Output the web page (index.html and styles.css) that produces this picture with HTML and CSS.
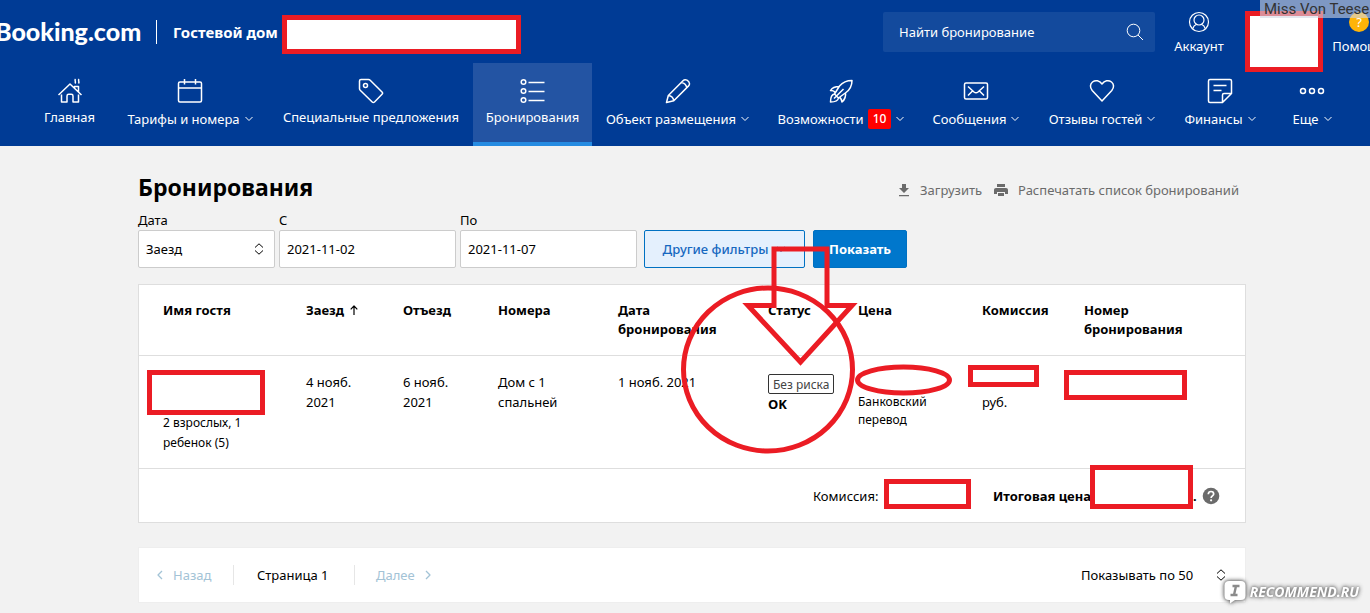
FILE: index.html
```html
<!DOCTYPE html>
<html lang="ru">
<head>
<meta charset="utf-8">
<title>Бронирования</title>
<link rel="stylesheet" href="styles.css">
</head>
<body>
<header class="header">
  <div class="topbar">
    <a class="logo" href="#">Booking.com</a>
    <span class="property">Гостевой дом</span>
    <form class="search">
      <input class="search-input" type="text" aria-label="Найти бронирование" placeholder="Найти бронирование">
      <button class="search-button" type="button" aria-label="Найти">
        <svg width="18" height="18" viewBox="0 0 18 18" class="line"><circle cx="7.5" cy="7.5" r="6.3"/><path d="M12 12l5 5"/></svg>
      </button>
    </form>
    <a class="account" href="#">
      <svg width="22" height="22" viewBox="0 0 22 22" class="line"><circle cx="11" cy="11" r="9.5"/><circle cx="11" cy="9" r="5"/><path d="M4.600 17.800c.8-2.300 2-3.800 4-4.500M17.400 17.800c-.8-2.300-2-3.800-4-4.500"/></svg>
      <span>Аккаунт</span>
    </a>
    <a class="help" href="#">
      <span class="help-icon">?</span>
      <span>Помощь</span>
    </a>
  </div>
  <nav class="nav">
    <a class="tab" href="#">
      <svg width="26" height="26" viewBox="0 0 26 26" class="line"><path d="M1.500 17L13 6l11.500 11M4.500 16.500V24h5.500v-6c0-1 .8-1.700 1.700-1.700h2.600c1 0 1.700.8 1.700 1.700v6h5.500v-7.500M17.500 10V8.500h4V14M18.500 1c-1.500 1.500 1 2.500-.5 4.500M22 1c-1.500 1.500 1 2.500-.5 4.500"/></svg>
      <span class="tab-label">Главная</span>
    </a>
    <a class="tab more" href="#">
      <svg width="26" height="26" viewBox="0 0 26 26" class="line"><rect x="1.500" y="4" width="23" height="20" rx="1.500"/><path d="M1.500 10h23M7.500 1v5.500M18.500 1v5.500"/></svg>
      <span class="tab-label">Тарифы и номера<svg class="chev line" width="8" height="6" viewBox="0 0 8 6"><path d="M.5 1L4 4.500 7.500 1"/></svg></span>
    </a>
    <a class="tab" href="#">
      <svg width="26" height="26" viewBox="0 0 26 26" class="line"><path d="M3 1.500h7.500c.7 0 1.200.2 1.700.7L24 14c.8.800.8 1.500 0 2.300L16.500 24c-.8.700-1.600.7-2.300 0L2.200 12.200c-.5-.5-.7-1-.7-1.700V3c0-1 .5-1.500 1.500-1.500z"/><circle cx="7.500" cy="7.500" r="2"/></svg>
      <span class="tab-label">Специальные предложения</span>
    </a>
    <a class="tab active" href="#" aria-current="page">
      <svg width="26" height="26" viewBox="0 0 26 26" class="line"><circle cx="3.500" cy="4" r="2.300"/><circle cx="3.500" cy="13" r="2.300"/><circle cx="3.500" cy="22" r="2.300"/><path d="M8.500 4.500h16M8.500 13.500h16M8.500 22.500h16"/></svg>
      <span class="tab-label">Бронирования</span>
    </a>
    <a class="tab more" href="#">
      <svg width="26" height="26" viewBox="0 0 26 26" class="line"><path d="M1.500 24.500l1.800-7L18 2.700c1-1 2.400-1.300 4-.5 1.500.8 2.300 2 2.500 3.300.1 1-.3 1.800-.9 2.400L8.800 22.700zM16.500 4.500c3 .5 4.800 2.300 5.300 5.300M3.300 17.500c3 .3 5 2.200 5.500 5.200"/></svg>
      <span class="tab-label">Объект размещения<svg class="chev line" width="8" height="6" viewBox="0 0 8 6"><path d="M.5 1L4 4.500 7.500 1"/></svg></span>
    </a>
    <a class="tab more" href="#">
      <svg width="26" height="26" viewBox="0 0 26 26" class="line"><path d="M24 2.500c-5.500 0-9.500 2-12.500 5.500l-5 8 4 4 7.500-5.500c4-3 6-7 6-12zM11.500 8.500C8 8.500 4.500 9 2.500 12.500c2.500 0 4 .5 4.500 2M17.500 14.500c.5 3.500 0 6.500-3.500 9.500-.5-2.500-1-4-2.500-4.500M6.500 16c-3 .5-4 4-4 8 4 0 7.500-1 8-4M6 20.500L15.500 11"/></svg>
      <span class="tab-label">Возможности<b class="count">10</b><svg class="chev line" width="8" height="6" viewBox="0 0 8 6"><path d="M.5 1L4 4.500 7.500 1"/></svg></span>
    </a>
    <a class="tab more" href="#">
      <svg width="26" height="26" viewBox="0 0 26 26" class="line"><rect x="1.500" y="5" width="23" height="16" rx="1.500"/><path d="M5 8.500l6 5.500c1.300 1 2.700 1 4 0l6-5.500M5 17.500l4.500-4.500M21 17.500L16.500 13"/></svg>
      <span class="tab-label">Сообщения<svg class="chev line" width="8" height="6" viewBox="0 0 8 6"><path d="M.5 1L4 4.500 7.500 1"/></svg></span>
    </a>
    <a class="tab more" href="#">
      <svg width="26" height="26" viewBox="0 0 26 26" class="line"><path d="M13 23L3.200 12.500C.7 9.500 1 6 3.500 4c3-2.300 7-1.500 9.500 2 2.500-3.500 6.500-4.300 9.500-2 2.500 2 2.800 5.500.3 8.500z"/></svg>
      <span class="tab-label">Отзывы гостей<svg class="chev line" width="8" height="6" viewBox="0 0 8 6"><path d="M.5 1L4 4.500 7.500 1"/></svg></span>
    </a>
    <a class="tab more" href="#">
      <svg width="26" height="26" viewBox="0 0 26 26" class="line"><path d="M15.500 24.500H3c-1 0-1.500-.5-1.500-1.500V3c0-1 .5-1.500 1.500-1.500h20c1 0 1.500.5 1.500 1.500v12.500zM15.500 24.500V17c0-1 .5-1.500 1.500-1.500h7.500M6.500 7.500h13M6.500 12.500h8"/></svg>
      <span class="tab-label">Финансы<svg class="chev line" width="8" height="6" viewBox="0 0 8 6"><path d="M.5 1L4 4.500 7.500 1"/></svg></span>
    </a>
    <a class="tab more" href="#">
      <svg width="26" height="26" viewBox="0 0 26 26" class="line"><circle cx="4" cy="13" r="2.500"/><circle cx="13" cy="13" r="2.500"/><circle cx="22" cy="13" r="2.500"/></svg>
      <span class="tab-label">Еще<svg class="chev line" width="8" height="6" viewBox="0 0 8 6"><path d="M.5 1L4 4.500 7.500 1"/></svg></span>
    </a>
  </nav>
</header>

<main class="content">
  <div class="title-row">
    <h1 class="title">Бронирования</h1>
    <div class="actions">
      <a class="action" href="#">
        <svg width="12" height="14" viewBox="0 0 12 14" fill="currentColor"><path d="M4 1h4v4h3L6 10 1 5h3zM1 12h10v1.300H1z"/></svg>Загрузить</a>
      <a class="action" href="#">
        <svg width="14" height="14" viewBox="0 0 14 14" fill="currentColor"><path d="M3 1h8v3H3zM2 5h10c1.200 0 2 .8 2 2v4h-3V9H3v2H0V7c0-1.200.8-2 2-2zM4 10h6v3H4z"/></svg>Распечатать список бронирований</a>
    </div>
  </div>

  <form class="filters">
    <div class="field field-type">
      <label for="date-type">Дата</label>
      <div class="select-wrap">
        <select id="date-type" class="control"><option>Заезд</option></select>
        <svg class="sort line" width="10" height="12" viewBox="0 0 10 12"><path d="M1 4.500L5 .8l4 3.700M1 7.500l4 3.700 4-3.700"/></svg>
      </div>
    </div>
    <div class="field field-date">
      <label for="date-from">С</label>
      <input id="date-from" class="control" type="text" value="2021-11-02">
    </div>
    <div class="field field-date">
      <label for="date-to">По</label>
      <input id="date-to" class="control" type="text" value="2021-11-07">
    </div>
    <div class="buttons">
      <button class="button secondary" type="button">Другие фильтры<svg class="line" width="10" height="6" viewBox="0 0 10 6"><path d="M1 1l4 4 4-4"/></svg></button>
      <button class="button primary" type="button">Показать</button>
    </div>
  </form>

  <section class="card">
    <table class="bookings">
      <colgroup>
        <col class="c-guest"><col class="c-in"><col class="c-out"><col class="c-rooms"><col class="c-date"><col class="c-status"><col class="c-price"><col class="c-fee"><col class="c-number">
      </colgroup>
      <thead>
        <tr>
          <th>Имя гостя</th>
          <th>Заезд<svg class="arrow line" width="8" height="10" viewBox="0 0 8 10"><path d="M4 10V1M.7 4.300L4 1l3.300 3.300"/></svg></th>
          <th>Отъезд</th>
          <th>Номера</th>
          <th>Дата<br>бронирования</th>
          <th>Статус</th>
          <th>Цена</th>
          <th>Комиссия</th>
          <th>Номер<br>бронирования</th>
        </tr>
      </thead>
      <tbody>
        <tr>
          <td><div class="blank double"></div><div class="guests">2 взрослых, 1<br>ребенок (5)</div></td>
          <td>4 нояб.<br>2021</td>
          <td>6 нояб.<br>2021</td>
          <td>Дом с 1<br>спальней</td>
          <td>1 нояб. 2021</td>
          <td><span class="badge">Без риска</span><b class="ok">OK</b></td>
          <td><div class="blank"></div><div class="payment">Банковский<br>перевод</div></td>
          <td><div class="blank"></div>руб.</td>
          <td></td>
        </tr>
      </tbody>
    </table>
    <div class="totals">
      <span class="total-fee">Комиссия:</span>
      <b class="total-price">Итоговая цена:</b>
      <b class="total-end">.</b>
      <svg width="18" height="18" viewBox="0 0 18 18"><circle cx="9" cy="9" r="8.300" fill="#6b6b6b"/><path d="M6.300 7.200C6.300 5.500 7.500 4.500 9 4.500s2.700 1 2.700 2.500c0 1.900-2.600 2-2.600 4" fill="none" stroke="#fff" stroke-width="1.700"/><circle cx="9.100" cy="13.300" r="1.100" fill="#fff"/></svg>
    </div>
  </section>

  <section class="card pager">
    <button class="page-link back" type="button" disabled><svg class="line" width="6" height="10" viewBox="0 0 6 10"><path d="M5 1L1 5l4 4"/></svg>Назад</button>
    <span class="page-current">Страница 1</span>
    <button class="page-link" type="button" disabled>Далее<svg class="line" width="6" height="10" viewBox="0 0 6 10"><path d="M1 1l4 4-4 4"/></svg></button>
    <div class="select-wrap per-page">
      <select class="per-page-select" aria-label="Показывать по"><option>Показывать по 50</option></select>
      <svg class="sort line" width="10" height="12" viewBox="0 0 10 12"><path d="M1 4.500L5 .8l4 3.700M1 7.500l4 3.700 4-3.700"/></svg>
    </div>
  </section>
</main>

<svg class="markup" width="1370" height="613" viewBox="0 0 1370 613" aria-hidden="true">
  <g fill="#fff" stroke="#eb1c24" stroke-width="5" shape-rendering="crispEdges">
    <rect x="284.500" y="17.500" width="234" height="34"/>
    <rect x="1247.500" y="13.500" width="73" height="56"/>
    <rect x="149.500" y="372.500" width="113" height="40"/>
    <rect x="970.500" y="367.500" width="66" height="17"/>
    <rect x="1066.500" y="372.500" width="118" height="25"/>
    <rect x="886.500" y="481.500" width="82" height="25"/>
    <rect x="1092.500" y="467.500" width="98" height="39"/>
  </g>
  <g fill="none" stroke="#eb1c24" stroke-width="5">
    <ellipse cx="768" cy="369.500" rx="84.500" ry="81.500"/>
    <ellipse cx="903.500" cy="380" rx="46" ry="13"/>
    <path d="M774 249h53v56.500h25L800.500 362 748 305.500h26z"/>
  </g>
</svg>
<div class="author">Miss Von Teese</div>
<div class="site">
  <svg width="22" height="24" viewBox="0 0 22 24"><path d="M5 1h12c3 0 4.500 1.500 4.500 4.500v10c0 3-1.500 4.500-4.500 4.500h-6l-5 3.500V20H5c-3 0-4.500-1.500-4.500-4.500v-10C.5 2.500 2 1 5 1z" fill="#fff"/><path d="M8.500 6h7M6.500 15h7M12 6l-2 9" stroke="#8b8b8b" stroke-width="2.400" fill="none"/></svg>
  <span>RECOMMEND.RU</span>
</div>
</body>
</html>
```

FILE: styles.css
```css
* { box-sizing: border-box; }

body {
  margin: 0;
  position: relative;
  min-height: 100vh;
  background: #f2f2f2;
  color: #000;
  font: 13px/20px "Noto Sans", "Open Sans", sans-serif;
  overflow-x: hidden;
}

a { color: inherit; text-decoration: none; }
svg { flex: none; }
button, input, select { font: inherit; color: inherit; }

.line {
  fill: none;
  stroke: currentColor;
  stroke-width: 1.5;
  stroke-linejoin: round;
}

.header { background: #003b95; color: #fff; overflow: hidden; }

.topbar { display: flex; align-items: center; height: 63px; white-space: nowrap; }

.logo {
  width: 162px;
  height: 24px;
  margin-left: -5px;
  margin-right: 16px;
  border-right: 1px solid #fff;
  font: 900 25px/22px Lato, sans-serif;
}

.property { flex: 1; font-size: 15px; font-weight: 700; }

.search {
  display: flex;
  align-items: center;
  width: 272px;
  height: 40px;
  padding: 0 10px 0 16px;
  border-radius: 2px;
  background: #134a9d;
}

.search-input {
  flex: 1;
  min-width: 0;
  padding: 0;
  border: 0;
  background: none;
  outline: 0;
}
.search-input::placeholder { color: #fff; opacity: 1; }

.search-button { display: flex; padding: 1px; border: 0; background: none; }
.search-button .line { stroke-width: 1; }

.account, .help { display: flex; flex-direction: column; align-items: center; gap: 3px; padding-top: 3px; }
.account { width: 48px; margin: 0 110px 0 20px; }
.account .line { stroke-width: 1.2; }
.help { width: 52px; margin-right: -15px; }

.help-icon {
  width: 20px;
  height: 20px;
  margin: 1px 0;
  border-radius: 50%;
  background: #feb408;
  text-align: center;
}

.nav {
  display: grid;
  grid-template-columns: 83fr 158fr 204fr 119fr 171fr 156fr 114fr 138fr 98fr 86fr;
  padding: 0 15px 0 28px;
}

.tab {
  display: flex;
  flex-direction: column;
  align-items: center;
  gap: 3px;
  min-width: 0;
  height: 83px;
  padding-top: 15px;
  white-space: nowrap;
}
.tab.more { gap: 5px; }
.tab.active { background: #2354a3; border-bottom: 4px solid #268ce2; }
.tab-label { display: flex; align-items: center; }
.chev { margin-left: 5px; stroke-width: 1; }

.count {
  padding: 0 5px;
  margin-left: 4px;
  border-radius: 2px;
  background: #f00;
  font-size: 12px;
  font-weight: 500;
}

.content { padding: 27px 124px 10px 138px; }

.title-row { display: flex; justify-content: space-between; align-items: center; height: 28px; }
.title { margin: 0; font-size: 23px; line-height: 28px; }
.actions { display: flex; gap: 12px; padding: 6px 7px 0 0; color: #6b6b6b; }
.action { display: flex; align-items: center; gap: 10px; }

.filters { display: flex; align-items: flex-end; gap: 4px; padding-top: 9px; }
.field { display: flex; flex-direction: column; }
.field-type { width: 137px; }
.field-date { width: 177px; }

.control {
  width: 100%;
  height: 38px;
  padding: 0 7px;
  border: 1px solid #ccc;
  border-radius: 2px;
  background: #fff;
  appearance: none;
}

.select-wrap { display: flex; position: relative; }
.sort { position: absolute; right: 11px; top: 50%; margin-top: -6px; stroke-width: 1; pointer-events: none; }

.buttons { display: flex; gap: 8px; margin-left: 3px; }

.button {
  display: flex;
  align-items: center;
  justify-content: center;
  gap: 8px;
  height: 38px;
  padding: 0 15px;
  border: 1px solid #0071c2;
  border-radius: 2px;
  white-space: nowrap;
}
.secondary { min-width: 161px; background: #e4f0fd; color: #1668c0; font-weight: 500; }
.primary { min-width: 94px; background: #0077cc; color: #fff; font-weight: 700; }

.card { margin-top: 16px; border: 1px solid #dedede; background: #fff; }

.bookings { width: 100%; table-layout: fixed; border-collapse: collapse; }
.bookings th, .bookings td {
  padding: 16px 0 16px 24px;
  border-bottom: 1px solid #dedede;
  text-align: left;
  vertical-align: top;
  white-space: nowrap;
}
.bookings th { line-height: 19px; }
.c-guest { width: 12.93%; }
.c-in { width: 8.77%; }
.c-out { width: 8.59%; }
.c-rooms { width: 10.85%; }
.c-date { width: 13.56%; }
.c-status { width: 8.14%; }
.c-price { width: 11.21%; }
.c-fee { width: 9.22%; }
.c-number { width: 16.73%; }

.arrow { margin-left: 6px; stroke-width: 1.2; }
.blank { height: 20px; }
.blank.double { height: 40px; }
.guests { font-size: 12px; padding-top: 1px; margin-bottom: -1px; }
.payment { font-size: 12px; line-height: 18px; padding-top: 1px; }

.badge {
  display: block;
  width: max-content;
  height: 20px;
  margin-top: 2px;
  padding: 0 4px;
  border: 1px solid #333;
  border-radius: 2px;
  color: #444;
  font-size: 12px;
}
.ok { display: block; }

.totals { display: flex; align-items: center; height: 53px; padding-right: 25px; }
.total-fee { margin-left: auto; width: 180px; }
.total-price { width: 200px; }
.total-end { width: 9px; }

.pager { display: flex; align-items: center; height: 56px; margin-top: 24px; padding: 0 14px 0 18px; border-color: #eee; }
.page-link { display: flex; align-items: center; gap: 10px; padding: 0; border: 0; background: none; color: #a3c3d6; }
.page-link .line { stroke-width: 1.3; }
.page-link.back { width: 76px; }
.page-current { width: 122px; margin-right: 21px; padding-left: 23px; border-left: 1px solid #e6e6e6; border-right: 1px solid #e6e6e6; white-space: nowrap; }
.per-page { margin-left: auto; width: 150px; }
.per-page-select { width: 100%; padding: 0; border: 0; background: none; appearance: none; }
.per-page .sort { right: 5px; }

.markup { position: absolute; top: 0; left: 0; pointer-events: none; }

.author {
  position: absolute;
  top: 0;
  right: 0;
  width: 110px;
  height: 18px;
  padding-left: 4px;
  background: rgba(210, 215, 228, 0.6);
  color: #333;
  font: 15px/19px Roboto, sans-serif;
  white-space: nowrap;
}

.site {
  position: absolute;
  right: 11px;
  bottom: 9px;
  display: flex;
  align-items: center;
  gap: 4px;
  color: #fff;
  font: italic 700 14px/20px "Open Sans", sans-serif;
  filter: drop-shadow(0 0 2px #777) drop-shadow(0 0 1px #888);
}
```
